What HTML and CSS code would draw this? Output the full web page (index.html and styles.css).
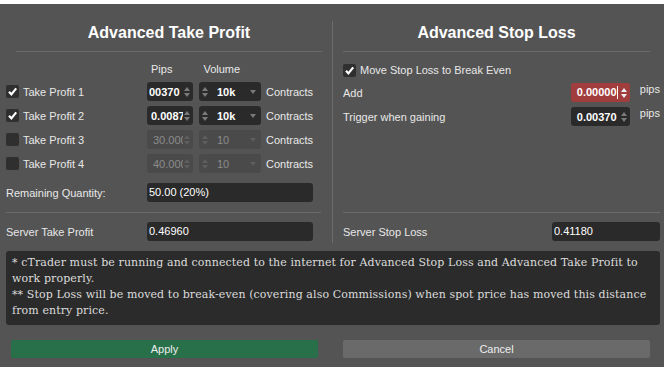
FILE: index.html
```html
<!DOCTYPE html>
<html lang="en">
<head>
    <meta charset="UTF-8">
    <meta name="viewport" content="width=device-width, initial-scale=1.0">
    <title>Advanced Protection</title>
    <link rel="stylesheet" href="styles.css">
</head>
<body>
    <div class="dialog">
        <div class="panels">
            <section class="panel panel-tp">
                <h2 class="title">Advanced Take Profit</h2>
                <div class="col-heads">
                    <span class="head-pips">Pips</span>
                    <span class="head-vol">Volume</span>
                </div>

                <div class="tp-row">
                    <label class="check"><span class="box on"><svg viewBox="0 0 13 13"><path d="M3 6.8 L5.4 9.4 L10.2 3.4"/></svg></span>Take Profit 1</label>
                    <div class="spin"><span class="spin-val scrolled">00370</span><span class="arrows"><i class="up"></i><i class="down"></i></span></div>
                    <div class="vol"><span class="arrows"><i class="up"></i><i class="down"></i></span><span class="vol-val">10k</span><i class="caret"></i></div>
                    <span class="unit">Contracts</span>
                </div>
                <div class="tp-row">
                    <label class="check"><span class="box on"><svg viewBox="0 0 13 13"><path d="M3 6.8 L5.4 9.4 L10.2 3.4"/></svg></span>Take Profit 2</label>
                    <div class="spin"><span class="spin-val">0.00870</span><span class="arrows"><i class="up"></i><i class="down"></i></span></div>
                    <div class="vol"><span class="arrows"><i class="up"></i><i class="down"></i></span><span class="vol-val">10k</span><i class="caret"></i></div>
                    <span class="unit">Contracts</span>
                </div>
                <div class="tp-row">
                    <label class="check"><span class="box"></span>Take Profit 3</label>
                    <div class="spin off"><span class="spin-val">30.00000</span><span class="arrows"><i class="up"></i><i class="down"></i></span></div>
                    <div class="vol off"><span class="arrows"><i class="up"></i><i class="down"></i></span><span class="vol-val">10</span><i class="caret"></i></div>
                    <span class="unit">Contracts</span>
                </div>
                <div class="tp-row">
                    <label class="check"><span class="box"></span>Take Profit 4</label>
                    <div class="spin off"><span class="spin-val">40.00000</span><span class="arrows"><i class="up"></i><i class="down"></i></span></div>
                    <div class="vol off"><span class="arrows"><i class="up"></i><i class="down"></i></span><span class="vol-val">10</span><i class="caret"></i></div>
                    <span class="unit">Contracts</span>
                </div>

                <div class="field-row remaining">
                    <span class="field-label">Remaining Quantity:</span>
                    <div class="field wide">50.00 (20%)</div>
                </div>

                <div class="bottom">
                    <div class="field-row">
                        <span class="field-label">Server Take Profit</span>
                        <div class="field wide">0.46960</div>
                    </div>
                </div>
            </section>

            <section class="panel panel-sl">
                <h2 class="title">Advanced Stop Loss</h2>
                <label class="check be"><span class="box on"><svg viewBox="0 0 13 13"><path d="M3 6.8 L5.4 9.4 L10.2 3.4"/></svg></span>Move Stop Loss to Break Even</label>

                <div class="sl-row">
                    <span class="field-label">Add</span>
                    <div class="spin sl-spin error"><span class="spin-val">0.00000<b class="caret-line"></b></span><span class="arrows"><i class="up"></i><i class="down"></i></span></div>
                    <span class="unit pips">pips</span>
                </div>
                <div class="sl-row">
                    <span class="field-label">Trigger when gaining</span>
                    <div class="spin sl-spin"><span class="spin-val">0.00370</span><span class="arrows"><i class="up"></i><i class="down"></i></span></div>
                    <span class="unit pips">pips</span>
                </div>

                <div class="bottom">
                    <div class="field-row">
                        <span class="field-label">Server Stop Loss</span>
                        <div class="field narrow">0.41180</div>
                    </div>
                </div>
            </section>
        </div>

        <div class="notes">
            * cTrader must be running and connected to the internet for Advanced Stop Loss and Advanced Take Profit to work properly.<br>
            ** Stop Loss will be moved to break-even (covering also Commissions) when spot price has moved this distance from entry price.
        </div>

        <div class="actions">
            <button class="btn apply">Apply</button>
            <button class="btn cancel">Cancel</button>
        </div>
    </div>
</body>
</html>
```

FILE: styles.css
```css
body {
    margin: 0;
    background-color: #545454;
    color: #e8e8e8;
    font-family: "Liberation Sans", Arial, sans-serif;
    font-size: 11px;
}

.dialog {
    border-top: 4px solid #ffffff;
    height: 363px;
}

.panels {
    display: flex;
    margin-top: 17px;
}

.panel {
    display: flex;
    flex-direction: column;
    height: 222px;
    box-sizing: border-box;
    padding-bottom: 2px;
}

.panel-tp {
    width: 333px;
    border-right: 1px solid #6c6c6c;
    padding-left: 6px;
    box-sizing: border-box;
}

.panel-sl {
    flex: 1;
    padding: 0 4px 2px 10px;
}

.title {
    margin: 0;
    height: 24px;
    line-height: 24px;
    padding-bottom: 6px;
    border-bottom: 1px solid #6c6c6c;
    text-align: center;
    font-size: 16px;
    font-weight: bold;
    color: #ffffff;
}

.panel-tp .title {
    margin: 0 10px 0 10px;
}

.panel-sl .title {
    margin-right: 10px;
}

.col-heads {
    display: flex;
    margin-top: 10px;
    height: 14px;
    line-height: 14px;
}

.head-pips {
    margin-left: 145px;
}

.head-vol {
    margin-left: 31px;
}

.tp-row {
    display: flex;
    align-items: center;
    height: 19px;
    margin-top: 5px;
}

.col-heads + .tp-row {
    margin-top: 6px;
}

.check {
    display: flex;
    align-items: center;
    width: 141px;
}

.box {
    width: 13px;
    height: 13px;
    border-radius: 2px;
    background-color: #2f2f2f;
    margin-right: 4px;
    display: flex;
}

.box svg {
    width: 13px;
    height: 13px;
    fill: none;
    stroke: #ffffff;
    stroke-width: 2.2;
}

.spin {
    display: flex;
    align-items: center;
    width: 46px;
    height: 19px;
    background-color: #2a2a2a;
    border-radius: 3px;
    box-sizing: border-box;
    padding: 0 2px 0 2px;
    color: #ffffff;
    font-weight: bold;
}

.spin-val {
    flex: 1;
    overflow: hidden;
    white-space: nowrap;
    padding-left: 2px;
}

.spin-val.scrolled {
    padding-left: 0;
}

.arrows {
    display: flex;
    flex-direction: column;
    align-items: center;
    gap: 2px;
    width: 8px;
}

.arrows i {
    width: 0;
    height: 0;
    border-left: 3px solid transparent;
    border-right: 3px solid transparent;
}

.arrows .up {
    border-bottom: 4px solid #7a7a7a;
}

.arrows .down {
    border-top: 4px solid #7a7a7a;
}

.vol {
    display: flex;
    align-items: center;
    width: 62px;
    height: 19px;
    margin-left: 6px;
    background-color: #2a2a2a;
    border-radius: 3px;
    box-sizing: border-box;
    padding: 0 5px 0 2px;
    color: #ffffff;
    font-weight: bold;
}

.vol-val {
    flex: 1;
    padding-left: 8px;
}

.caret {
    width: 0;
    height: 0;
    border-left: 3px solid transparent;
    border-right: 3px solid transparent;
    border-top: 4px solid #7a7a7a;
}

.spin.off,
.vol.off {
    background-color: #4a4a4a;
    color: #8c8c8c;
    font-weight: normal;
}

.spin.off .spin-val {
    padding-left: 4px;
}

.off .arrows .up {
    border-bottom-color: #5e5e5e;
}

.off .arrows .down,
.off .caret {
    border-top-color: #5e5e5e;
}

.unit {
    margin-left: 5px;
}

.field-row {
    display: flex;
    align-items: center;
    height: 19px;
}

.field-label {
    flex: 1;
}

.panel-tp .field-label {
    flex: none;
    width: 141px;
}

.remaining {
    margin-top: 10px;
}

.field {
    height: 19px;
    line-height: 19px;
    background-color: #2a2a2a;
    border-radius: 3px;
    padding-left: 2px;
    box-sizing: border-box;
    color: #ffffff;
}

.field.wide {
    width: 166px;
}

.field.narrow {
    width: 108px;
}

.bottom {
    margin-top: auto;
    border-top: 1px solid #6c6c6c;
    padding-top: 9px;
}

.panel-tp .bottom {
    margin-right: 11px;
}

.be {
    width: auto;
    margin-top: 11px;
    height: 14px;
}

.sl-row {
    display: flex;
    align-items: center;
    height: 19px;
    margin-top: 5px;
}

.be + .sl-row {
    margin-top: 6px;
}

.sl-spin {
    width: 59px;
}

.sl-spin .spin-val {
    padding-left: 4px;
}

.spin.error {
    background-color: #a23d3d;
}

.error .arrows .up {
    border-bottom-color: #f0f0f0;
}

.error .arrows .down {
    border-top-color: #f0f0f0;
}

.caret-line {
    display: inline-block;
    width: 1px;
    height: 13px;
    background-color: #ffffff;
    vertical-align: -3px;
}

.pips {
    margin-left: 10px;
    align-self: flex-start;
}

.notes {
    margin: 8px 4px 0 6px;
    padding: 4px 6px 6px 6px;
    background-color: #2b2b2b;
    border-radius: 3px;
    font-family: "DejaVu Serif", serif;
    font-size: 11px;
    line-height: 16px;
    letter-spacing: 0.1px;
    color: #dcdcdc;
}

.actions {
    display: flex;
    gap: 25px;
    margin-top: 15px;
    padding-left: 11px;
}

.btn {
    width: 307px;
    height: 18px;
    border: none;
    border-radius: 2px;
    font-family: "Liberation Sans", Arial, sans-serif;
    font-size: 11px;
    color: #eeeeee;
    padding: 0;
}

.apply {
    background-color: #28704a;
}

.cancel {
    background-color: #6a6a6a;
}
```
